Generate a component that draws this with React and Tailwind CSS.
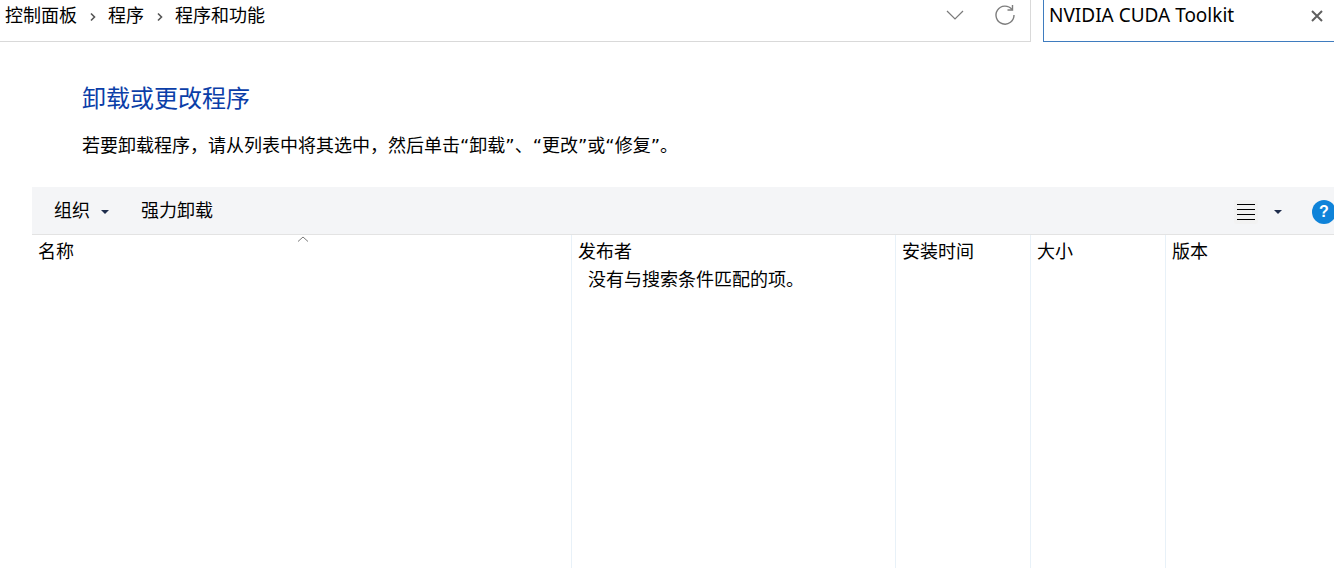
const FONT = "font-['Liberation_Sans','Noto_Sans_CJK_SC',sans-serif]";

function Chevron() {
  return (
    <svg width="8" height="10" viewBox="0 0 8 10" fill="none" className="mx-[12px]">
      <path d="M2 1.5 L5.5 5 L2 8.5" stroke="#555" strokeWidth="1.6" />
    </svg>
  );
}

function Caret() {
  return (
    <svg width="8" height="4" viewBox="0 0 8 4">
      <path d="M0 0 H8 L4 4 Z" fill="#1f2d4d" />
    </svg>
  );
}

// the curly quotes are wider in the reference than in Liberation Sans
function Quoted({ children }) {
  return (
    <>
      <span className="font-['DejaVu_Sans']">“</span>
      {children}
      <span className="font-['DejaVu_Sans']">”</span>
    </>
  );
}

const columns = [
  { label: "名称", width: "w-[540px]" },
  { label: "发布者", width: "w-[324px]" },
  { label: "安装时间", width: "w-[135px]" },
  { label: "大小", width: "w-[135px]" },
  { label: "版本", width: "flex-1" },
];

export default function App() {
  return (
    <div className={`${FONT} relative h-[568px] w-[1334px] overflow-hidden bg-white text-[18px] text-black`}>
      {/* address bar */}
      <div className="flex h-[42px]">
        <div className="flex h-[42px] w-[1031px] items-center border-r border-b border-[#d9d9d9] pb-[8px] pl-[5px]">
          <span>控制面板</span>
          <Chevron />
          <span className="-ml-[1px]">程序</span>
          <Chevron />
          <span className="-ml-[1px]">程序和功能</span>
          <div className="ml-auto mb-[4px] flex items-center">
            <svg width="18" height="10" viewBox="0 0 18 10" fill="none">
              <path d="M1 1 L9 9 L17 1" stroke="#7a7a7a" strokeWidth="1.2" />
            </svg>
            <svg width="22" height="22" viewBox="0 0 22 22" fill="none" className="mr-[14px] ml-[30px]">
              <path d="M18 5.5 A9 9 0 1 0 20 11" stroke="#7d7d7d" strokeWidth="1.4" />
              <path d="M18.5 1 V6 H13.5" stroke="#7d7d7d" strokeWidth="1.4" />
            </svg>
          </div>
        </div>
        <div className="ml-[12px] flex h-[42px] flex-1 items-center border-b border-l border-[#3f7cbf] pb-[10px] pl-[5px]">
          <span className="font-['Noto_Sans'] text-[19px] leading-none">NVIDIA CUDA Toolkit</span>
          <svg width="12" height="12" viewBox="0 0 12 12" fill="none" className="mr-[11px] ml-auto">
            <path d="M1 1 L11 11 M11 1 L1 11" stroke="#5f5f5f" strokeWidth="2" />
          </svg>
        </div>
      </div>

      {/* heading */}
      <div className="pt-[41px] pl-[82px]">
        <h1 className="text-[24px] leading-[32px] text-[#0b3ea8]">卸载或更改程序</h1>
        <p className="mt-[18px] text-[18px] leading-[26px]">
          若要卸载程序，请从列表中将其选中，然后单击<Quoted>卸载</Quoted>、<Quoted>更改</Quoted>或<Quoted>修复</Quoted>。
        </p>
      </div>

      {/* toolbar */}
      <div className="mt-[28px] ml-[32px] flex h-[48px] items-center border-b border-[#e3e3e3] bg-[#f4f5f7] pt-[2px] pl-[22px]">
        <span>组织</span>
        <span className="ml-[11px]"><Caret /></span>
        <span className="ml-[32px]">强力卸载</span>
        <div className="ml-auto flex items-center">
          <div className="flex h-[24px] w-[24px] flex-col items-center justify-center gap-[4px] rounded-[2px] bg-[#f2f2f2]">
            <div className="h-[1px] w-[18px] bg-black" />
            <div className="h-[1px] w-[18px] bg-black" />
            <div className="h-[1px] w-[18px] bg-black" />
            <div className="h-[1px] w-[18px] bg-black" />
          </div>
          <span className="ml-[16px]"><Caret /></span>
          <div className="mr-[-2px] ml-[30px] flex h-[24px] w-[24px] items-center justify-center rounded-full bg-[#0f83d9] text-[16px] font-bold text-white">
            ?
          </div>
        </div>
      </div>

      {/* file list */}
      <div className="ml-[32px] flex h-[333px]">
        {columns.map((col, i) => (
          <div
            key={col.label}
            className={`${col.width} ${i < 4 ? "border-r border-[#e8f1f8]" : ""} relative`}
          >
            <div className="pt-[4px] pl-[6px] leading-[26px]">{col.label}</div>
            {i === 1 && <div className="mt-[2px] pl-[16px] text-[18px] leading-[26px]">没有与搜索条件匹配的项。</div>}
            {i === 0 && (
              <svg width="12" height="6" viewBox="0 0 12 6" fill="none" className="absolute top-[1px] left-[265px]">
                <path d="M1 5.5 L6 1 L11 5.5" stroke="#7a7a7a" strokeWidth="1" />
              </svg>
            )}
          </div>
        ))}
      </div>
    </div>
  );
}
